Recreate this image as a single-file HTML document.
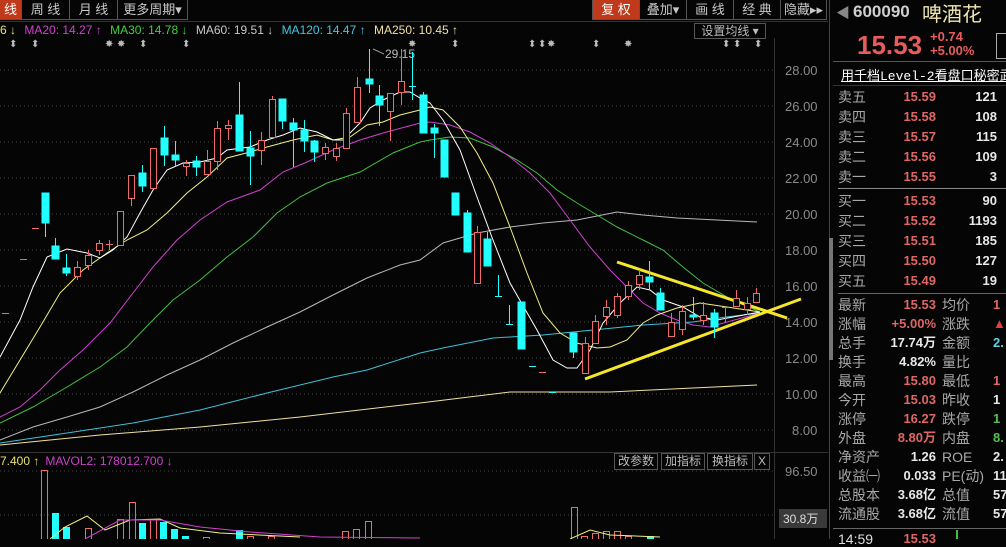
<!DOCTYPE html>
<html><head><meta charset="utf-8"><style>
html,body{margin:0;padding:0;background:#050505;width:1006px;height:539px;overflow:hidden;font-family:"Liberation Sans","Noto Sans CJK SC",sans-serif;}
.abs{position:absolute;white-space:nowrap;}
.tb{position:absolute;top:0;height:20px;line-height:20px;font-size:13px;color:#c8c8c8;text-align:center;border-right:1px solid #555;border-bottom:1px solid #555;box-sizing:border-box;}
.red{background:#c0391b;color:#fff;}
.lab,.pr,.vol,.l2,.v2{line-height:16px;height:16px;white-space:nowrap;}
.lab{position:absolute;left:838px;font-size:14px;color:#a8a8a8;}
.pr{position:absolute;width:70px;left:866px;text-align:right;font-size:13px;font-weight:bold;color:#e06666;}
.vol{position:absolute;width:60px;left:937px;text-align:right;font-size:13px;font-weight:bold;color:#e8e8e8;}
.l2{position:absolute;left:942px;font-size:14px;color:#a8a8a8;}
.v2{position:absolute;left:993px;font-size:13px;font-weight:bold;}
</style></head><body>
<div style="position:absolute;left:0;top:0;width:1006px;height:539px;">
<!-- toolbar -->
<div class="tb red" style="left:0;width:22px;">线</div>
<div class="tb" style="left:22px;width:48px;">周 线</div>
<div class="tb" style="left:70px;width:48px;">月 线</div>
<div class="tb" style="left:118px;width:70px;">更多周期▾</div>
<div class="tb red" style="left:592px;width:48px;border-left:1px solid #555">复 权</div>
<div class="tb" style="left:640px;width:47px;">叠加▾</div>
<div class="tb" style="left:687px;width:47px;">画 线</div>
<div class="tb" style="left:734px;width:47px;">经 典</div>
<div class="tb" style="left:781px;width:46px;">隐藏▸▸</div>
<div class="abs" style="left:0;top:21px;width:828px;height:1px;background:#333"></div>
<!-- MA legend -->
<div class="abs" style="left:0;top:22px;font-size:12px;line-height:16px;">
<span style="color:#e8e06a">6 ↓</span>
<span style="color:#d040d0;margin-left:5px">MA20: 14.27 ↑</span>
<span style="color:#40d040;margin-left:5px">MA30: 14.78 ↓</span>
<span style="color:#c8c8c8;margin-left:5px">MA60: 19.51 ↓</span>
<span style="color:#40c8e0;margin-left:5px">MA120: 14.47 ↑</span>
<span style="color:#f0e0a0;margin-left:5px">MA250: 10.45 ↑</span>
</div>
<div class="abs" style="left:694px;top:23px;width:70px;height:14px;border:1px solid #555;font-size:12px;line-height:14px;color:#bbb;text-align:center;">设置均线 ▾</div>

<svg class="abs" style="left:0;top:0" width="830" height="539" xmlns="http://www.w3.org/2000/svg">
<g stroke="#444" stroke-dasharray="1,3">
<line x1="0" y1="70" x2="774" y2="70"/><line x1="0" y1="106" x2="774" y2="106"/><line x1="0" y1="142" x2="774" y2="142"/><line x1="0" y1="178" x2="774" y2="178"/><line x1="0" y1="214" x2="774" y2="214"/><line x1="0" y1="250" x2="774" y2="250"/><line x1="0" y1="286" x2="774" y2="286"/><line x1="0" y1="322" x2="774" y2="322"/><line x1="0" y1="358" x2="774" y2="358"/><line x1="0" y1="394" x2="774" y2="394"/><line x1="0" y1="430" x2="774" y2="430"/>
<line x1="0" y1="471" x2="774" y2="471"/><line x1="0" y1="515" x2="774" y2="515"/>
</g>
<line x1="774.5" y1="38" x2="774.5" y2="539" stroke="#333"/>
<line x1="0" y1="452.5" x2="828" y2="452.5" stroke="#333"/>
<g fill="#8a8a8a" font-size="13" font-family="Liberation Sans">
<text x="785" y="75">28.00</text><text x="785" y="111">26.00</text><text x="785" y="147">24.00</text><text x="785" y="183">22.00</text><text x="785" y="219">20.00</text><text x="785" y="255">18.00</text><text x="785" y="291">16.00</text><text x="785" y="327">14.00</text><text x="785" y="363">12.00</text><text x="785" y="399">10.00</text><text x="792" y="435">8.00</text>
<text x="785" y="476">96.50</text><text x="785" y="520">47.70</text>
</g>
<rect x="779" y="509" width="48" height="19" fill="#3a3a3a"/>
<text x="783" y="523" fill="#ddd" font-size="12" font-family="Liberation Sans,Noto Sans CJK SC">30.8万</text>
<!-- markers -->
<g fill="#bbb" font-size="10" font-family="DejaVu Sans">
<text x="9" y="47">⬍</text><text x="31" y="47">⬍</text><text x="105" y="47">✸</text><text x="117" y="47">✸</text><text x="139" y="47">⬍</text><text x="182" y="47">⬍</text><text x="408" y="47">✸</text><text x="451" y="47">⬍</text><text x="528" y="47">⬍</text><text x="538" y="47">⬍</text><text x="547" y="47">✸</text><text x="592" y="47">⬍</text><text x="624" y="47">✸</text><text x="722" y="47">⬍</text><text x="733" y="47">⬍</text><text x="754" y="47">⬍</text>
</g>
<text x="385" y="58" fill="#bbb" font-size="12" font-family="Liberation Sans">29.15</text>
<line x1="373" y1="49" x2="384" y2="54" stroke="#999"/>
<!-- MA lines -->
<g fill="none" stroke-width="1">
<polyline stroke="#f0e0a0" points="0,445 100,435 200,427 300,417 420,403 510,392 610,392 693,388 757,385"/>
<polyline stroke="#40c0d8" points="0,443 67,433 133,423 200,410 267,393 333,377 367,370 420,353 443,348 493,338 543,335 593,330 643,325 693,322 726,317 760,313"/>
<polyline stroke="#b8b8b8" points="0,440 33,427 67,417 100,407 133,392 167,375 200,360 233,343 267,327 300,312 333,295 367,278 400,265 420,260 443,243 477,233 510,227 543,223 577,220 617,212 643,215 677,218 757,222"/>
<polyline stroke="#40c040" points="0,423 33,407 67,387 100,367 127,347 150,323 173,300 200,280 227,257 253,237 277,213 300,197 327,183 360,172 393,153 420,142 430,140 450,137 470,138 493,147 517,160 537,173 557,190 577,203 597,215 617,227 643,240 663,250 683,267 703,283 727,297 760,312"/>
<polyline stroke="#d040d0" points="0,417 20,407 40,390 60,370 83,350 110,323 133,293 153,267 177,240 200,220 227,202 260,190 283,172 307,162 333,150 360,140 383,133 420,123 430,122 450,125 470,132 490,143 510,157 530,173 550,193 570,220 590,247 610,270 627,287 643,303 660,313 677,320 693,325 710,327 727,322 760,313"/>
<polyline stroke="#f0f080" points="0,393 20,360 40,327 60,293 83,270 107,253 127,240 147,230 167,213 187,193 207,177 227,158 250,152 267,147 293,140 317,135 333,140 350,137 367,125 383,122 400,115 420,110 430,107 443,110 460,127 477,153 493,183 510,227 527,273 543,313 560,333 577,343 597,348 610,347 627,340 643,323 657,315 677,308 700,303 727,307 760,312"/>
<polyline stroke="#ffffff" points="0,357 20,320 33,287 47,257 67,249 87,253 100,258 113,250 127,237 140,213 153,190 167,170 183,163 200,162 217,158 227,150 250,147 267,140 283,135 300,128 317,132 333,140 343,140 360,123 370,108 383,100 400,92 410,92 420,98 430,103 443,120 460,150 477,197 493,240 510,283 537,330 553,360 567,368 577,368 590,350 603,323 620,303 637,287 650,290 663,300 683,307 700,317 717,320 733,317 760,312"/>
</g>
<!-- trend lines -->
<line x1="617" y1="262" x2="787" y2="318" stroke="#f5e62a" stroke-width="3"/>
<line x1="585" y1="379" x2="801" y2="299" stroke="#f5e62a" stroke-width="3"/>
<!-- candles -->
<g stroke-width="1">
<g stroke="#2ff" fill="#2ff">
<line x1="45.5" y1="193" x2="45.5" y2="237"/><rect x="42" y="193" width="7" height="30"/>
<line x1="55.5" y1="238" x2="55.5" y2="259"/><rect x="52" y="246" width="7" height="13"/>
<line x1="66.5" y1="254" x2="66.5" y2="276"/><rect x="63" y="268" width="7" height="5"/>
<line x1="142.5" y1="165" x2="142.5" y2="192"/><rect x="139" y="173" width="7" height="13"/>
<line x1="164.5" y1="126" x2="164.5" y2="166"/><rect x="161" y="138" width="7" height="17"/>
<line x1="175.5" y1="141" x2="175.5" y2="166"/><rect x="172" y="155" width="7" height="5"/>
<line x1="196.5" y1="156" x2="196.5" y2="176"/><rect x="193" y="161" width="7" height="6"/>
<line x1="239.5" y1="82" x2="239.5" y2="151"/><rect x="236" y="115" width="7" height="36"/>
<line x1="250.5" y1="131" x2="250.5" y2="185"/><rect x="247" y="148" width="7" height="8"/>
<line x1="282.5" y1="99" x2="282.5" y2="129"/><rect x="279" y="99" width="7" height="22"/>
<line x1="293.5" y1="118" x2="293.5" y2="167"/><rect x="290" y="123" width="7" height="7"/>
<line x1="304.5" y1="120" x2="304.5" y2="152"/><rect x="301" y="130" width="7" height="11"/>
<line x1="314.5" y1="140" x2="314.5" y2="162"/><rect x="311" y="141" width="7" height="11"/>
<line x1="369.5" y1="49" x2="369.5" y2="93"/><rect x="366" y="79" width="7" height="5"/>
<line x1="379.5" y1="85" x2="379.5" y2="126"/><rect x="376" y="96" width="7" height="9"/>
<line x1="412.5" y1="52" x2="412.5" y2="100"/><line x1="409" y1="86.5" x2="416" y2="86.5"/>
<line x1="423.5" y1="92" x2="423.5" y2="133"/><rect x="420" y="95" width="7" height="38"/>
<line x1="434.5" y1="124" x2="434.5" y2="158"/><rect x="431" y="128" width="7" height="5"/>
<rect x="441" y="140" width="7" height="37"/>
<rect x="452" y="193" width="7" height="22"/>
<line x1="467.5" y1="210" x2="467.5" y2="252"/><rect x="464" y="213" width="7" height="39"/>
<line x1="487.5" y1="232" x2="487.5" y2="266"/><rect x="484" y="239" width="7" height="27"/>
<line x1="498.5" y1="275" x2="498.5" y2="296"/><line x1="495" y1="296.5" x2="502" y2="296.5"/>
<line x1="509.5" y1="305" x2="509.5" y2="325"/><line x1="506" y1="324.5" x2="513" y2="324.5"/>
<rect x="518" y="302" width="7" height="47"/>
<line x1="529" y1="366.5" x2="536" y2="366.5"/>
<line x1="549" y1="392.5" x2="556" y2="392.5"/>
<line x1="573.5" y1="333" x2="573.5" y2="358"/><rect x="570" y="333" width="7" height="19"/>
<line x1="649.5" y1="261" x2="649.5" y2="290"/><rect x="646" y="277" width="7" height="5"/>
<line x1="660.5" y1="288" x2="660.5" y2="310"/><rect x="657" y="293" width="7" height="17"/>
<line x1="693.5" y1="297" x2="693.5" y2="320"/><rect x="690" y="315" width="7" height="2"/>
<line x1="714.5" y1="309" x2="714.5" y2="338"/><rect x="711" y="313" width="7" height="14"/>
</g>
<g stroke="#f06a6a" fill="none">
<line x1="2" y1="313.5" x2="9" y2="313.5"/><line x1="20" y1="259.5" x2="27" y2="259.5"/><line x1="32" y1="228.5" x2="39" y2="228.5"/>
<line x1="77.5" y1="261" x2="77.5" y2="280"/><rect x="74.5" y="267.5" width="6" height="9" fill="#050505"/>
<line x1="88.5" y1="250" x2="88.5" y2="270"/><rect x="85.5" y="255.5" width="6" height="10" fill="#050505"/>
<line x1="99.5" y1="240" x2="99.5" y2="255"/><rect x="96.5" y="243.5" width="6" height="7" fill="#050505"/>
<line x1="109.5" y1="240" x2="109.5" y2="250"/><line x1="106" y1="244.5" x2="113" y2="244.5"/>
<rect x="117.5" y="211.5" width="6" height="34" fill="#050505"/>
<line x1="131.5" y1="175" x2="131.5" y2="206"/><rect x="128.5" y="175.5" width="6" height="23" fill="#050505"/>
<rect x="150.5" y="148.5" width="6" height="40" fill="#050505"/>
<line x1="186.5" y1="160" x2="186.5" y2="176"/><rect x="183.5" y="163.5" width="6" height="3" fill="#050505"/>
<line x1="207.5" y1="150" x2="207.5" y2="170"/><rect x="204.5" y="161.5" width="6" height="13" fill="#050505"/>
<line x1="217.5" y1="121" x2="217.5" y2="170"/><rect x="214.5" y="128.5" width="6" height="33" fill="#050505"/>
<line x1="228.5" y1="120" x2="228.5" y2="140"/><rect x="225.5" y="125.5" width="6" height="3" fill="#050505"/>
<line x1="261.5" y1="132" x2="261.5" y2="165"/><rect x="258.5" y="140.5" width="6" height="10" fill="#050505"/>
<line x1="272.5" y1="96" x2="272.5" y2="137"/><rect x="269.5" y="99.5" width="6" height="38" fill="#050505"/>
<line x1="325.5" y1="143" x2="325.5" y2="160"/><rect x="322.5" y="147.5" width="6" height="6" fill="#050505"/>
<line x1="336.5" y1="143" x2="336.5" y2="161"/><rect x="333.5" y="148.5" width="6" height="8" fill="#050505"/>
<line x1="346.5" y1="108" x2="346.5" y2="148"/><rect x="343.5" y="113.5" width="6" height="35" fill="#050505"/>
<line x1="357.5" y1="77" x2="357.5" y2="122"/><rect x="354.5" y="87.5" width="6" height="35" fill="#050505"/>
<line x1="390.5" y1="93" x2="390.5" y2="141"/><rect x="387.5" y="93.5" width="6" height="18" fill="#050505"/>
<line x1="401.5" y1="49" x2="401.5" y2="105"/><rect x="398.5" y="81.5" width="6" height="11" fill="#050505"/>
<line x1="477.5" y1="226" x2="477.5" y2="283"/><rect x="474.5" y="232.5" width="6" height="51" fill="#050505"/>
<line x1="539" y1="372.5" x2="546" y2="372.5"/>
<line x1="585.5" y1="337" x2="585.5" y2="373"/><rect x="582.5" y="343.5" width="6" height="30" fill="#050505"/>
<line x1="595.5" y1="315" x2="595.5" y2="343"/><rect x="592.5" y="321.5" width="6" height="22" fill="#050505"/>
<line x1="606.5" y1="300" x2="606.5" y2="325"/><rect x="603.5" y="307.5" width="6" height="9" fill="#050505"/>
<line x1="617.5" y1="293" x2="617.5" y2="318"/><rect x="614.5" y="296.5" width="6" height="19" fill="#050505"/>
<line x1="628.5" y1="281" x2="628.5" y2="300"/><rect x="625.5" y="285.5" width="6" height="11" fill="#050505"/>
<line x1="639.5" y1="270" x2="639.5" y2="290"/><rect x="636.5" y="275.5" width="6" height="9" fill="#050505"/>
<line x1="671.5" y1="313" x2="671.5" y2="336"/><rect x="668.5" y="322.5" width="6" height="14" fill="#050505"/>
<line x1="682.5" y1="305" x2="682.5" y2="335"/><rect x="679.5" y="311.5" width="6" height="18" fill="#050505"/>
<line x1="703.5" y1="302" x2="703.5" y2="325"/><rect x="700.5" y="315.5" width="6" height="5" fill="#050505"/>
<line x1="725.5" y1="306" x2="725.5" y2="322"/><line x1="722" y1="307.5" x2="729" y2="307.5"/>
<line x1="736.5" y1="290" x2="736.5" y2="306"/><rect x="733.5" y="298.5" width="6" height="8" fill="#050505"/>
<line x1="747.5" y1="297" x2="747.5" y2="315"/><rect x="744.5" y="303.5" width="6" height="6" fill="#050505"/>
<line x1="756.5" y1="288" x2="756.5" y2="302"/><rect x="753.5" y="293.5" width="6" height="9" fill="#050505"/>
</g>
</g>
<!-- volume -->
<g stroke="#f06a6a" fill="none">
<rect x="41.5" y="470.5" width="6" height="75"/><rect x="85.5" y="528.5" width="6" height="20"/><rect x="117.5" y="519.5" width="6" height="20"/><rect x="129.5" y="502.5" width="6" height="40"/><rect x="150.5" y="519.5" width="6" height="30"/><rect x="203.5" y="537.5" width="6" height="10"/><rect x="247.5" y="536.5" width="6" height="10"/><rect x="268.5" y="536.5" width="6" height="10"/><rect x="342.5" y="531.5" width="6" height="10"/><rect x="353.5" y="529.5" width="6" height="10"/><rect x="365.5" y="521.5" width="6" height="20"/><rect x="571.5" y="507.5" width="6" height="40"/><rect x="581.5" y="536.5" width="6" height="10"/><rect x="592.5" y="533.5" width="6" height="10"/><rect x="603.5" y="531.5" width="6" height="10"/><rect x="614.5" y="531.5" width="6" height="10"/><rect x="625.5" y="536.5" width="6" height="10"/>
</g>
<g fill="#2ff">
<rect x="52" y="513" width="7" height="30"/><rect x="63" y="527" width="7" height="20"/><rect x="139" y="523" width="7" height="20"/><rect x="160" y="522" width="7" height="20"/><rect x="171" y="529" width="7" height="20"/><rect x="182" y="536" width="7" height="10"/><rect x="236" y="530" width="7" height="10"/><rect x="647" y="536" width="7" height="10"/>
</g>
<polyline fill="none" stroke="#f0f080" points="50,539 65,527 87,516 105,530 130,520 160,519 180,528 220,533 300,537"/>
<polyline fill="none" stroke="#d040d0" points="85,539 120,520 160,520 200,527 250,532 320,537 420,538"/>
<polyline fill="none" stroke="#f0f080" points="570,539 590,530 610,535 660,537"/>
</svg>
<!-- volume header -->
<div class="abs" style="left:0;top:453px;font-size:12px;line-height:16px;"><span style="color:#e8e06a">7.400 ↑</span><span style="color:#d040d0;margin-left:6px">MAVOL2: 178012.700 ↓</span></div>
<div class="abs" style="left:614px;top:453px;width:42px;height:15px;border:1px solid #555;font-size:12px;line-height:15px;color:#bbb;text-align:center">改参数</div>
<div class="abs" style="left:661px;top:453px;width:42px;height:15px;border:1px solid #555;font-size:12px;line-height:15px;color:#bbb;text-align:center">加指标</div>
<div class="abs" style="left:707px;top:453px;width:44px;height:15px;border:1px solid #555;font-size:12px;line-height:15px;color:#bbb;text-align:center">换指标</div>
<div class="abs" style="left:754px;top:453px;width:14px;height:15px;border:1px solid #555;font-size:12px;line-height:15px;color:#bbb;text-align:center">X</div>

<!-- right panel -->
<div class="abs" style="left:829px;top:0;width:1px;height:539px;background:#444"></div>
<div class="abs" style="left:829px;top:238px;width:4px;height:122px;background:#777"></div>
<div class="abs" style="left:836px;top:3px;font-size:14px;color:#888">◀</div>
<div class="abs" style="left:853px;top:2px;font-size:17px;font-weight:bold;color:#cfcfcf">600090</div>
<div class="abs" style="left:922px;top:0px;font-size:20px;color:#f0e6b0;font-family:'Noto Sans CJK SC',sans-serif;line-height:26px">啤酒花</div>
<div class="abs" style="left:857px;top:30px;font-size:26px;font-weight:bold;color:#e85c5c">15.53</div>
<div class="abs" style="left:930px;top:30px;font-size:13px;font-weight:bold;color:#e85c5c;line-height:14px">+0.74<br>+5.00%</div>
<div class="abs" style="left:996px;top:33px;width:14px;height:24px;border:1px solid #aaa"></div>
<div class="abs" style="left:833px;top:61px;width:173px;height:1px;background:#555"></div>
<div class="abs" style="left:841px;top:65px;font-size:13px;color:#fff;text-decoration:underline;font-family:'Liberation Mono','Noto Sans CJK SC',monospace">用千档Level-2看盘口秘密武</div>
<div class="abs" style="left:833px;top:85px;width:173px;height:1px;background:#333"></div>

<div class="lab" style="top:89px">卖五</div><div class="pr" style="top:89px">15.59</div><div class="vol" style="top:89px">121</div>
<div class="lab" style="top:109px">卖四</div><div class="pr" style="top:109px">15.58</div><div class="vol" style="top:109px">108</div>
<div class="lab" style="top:129px">卖三</div><div class="pr" style="top:129px">15.57</div><div class="vol" style="top:129px">115</div>
<div class="lab" style="top:149px">卖二</div><div class="pr" style="top:149px">15.56</div><div class="vol" style="top:149px">109</div>
<div class="lab" style="top:169px">卖一</div><div class="pr" style="top:169px">15.55</div><div class="vol" style="top:169px">3</div>
<div class="abs" style="left:838px;top:188px;width:168px;height:1px;background:#888"></div>
<div class="lab" style="top:193px">买一</div><div class="pr" style="top:193px">15.53</div><div class="vol" style="top:193px">90</div>
<div class="lab" style="top:213px">买二</div><div class="pr" style="top:213px">15.52</div><div class="vol" style="top:213px">1193</div>
<div class="lab" style="top:233px">买三</div><div class="pr" style="top:233px">15.51</div><div class="vol" style="top:233px">185</div>
<div class="lab" style="top:253px">买四</div><div class="pr" style="top:253px">15.50</div><div class="vol" style="top:253px">127</div>
<div class="lab" style="top:273px">买五</div><div class="pr" style="top:273px">15.49</div><div class="vol" style="top:273px">19</div>
<div class="abs" style="left:838px;top:293px;width:168px;height:1px;background:#666"></div>

<div class="lab" style="top:297px">最新</div><div class="pr" style="top:297px">15.53</div><div class="l2" style="top:297px">均价</div><div class="v2" style="top:297px;color:#e06666">1</div>
<div class="lab" style="top:316px">涨幅</div><div class="pr" style="top:316px">+5.00%</div><div class="l2" style="top:316px">涨跌</div><div class="v2" style="top:316px;color:#e04040">▲</div>
<div class="lab" style="top:335px">总手</div><div class="pr" style="top:335px;color:#e8e8e8">17.74万</div><div class="l2" style="top:335px">金额</div><div class="v2" style="top:335px;color:#60d0e0">2.</div>
<div class="lab" style="top:354px">换手</div><div class="pr" style="top:354px;color:#e8e8e8">4.82%</div><div class="l2" style="top:354px">量比</div>
<div class="lab" style="top:373px">最高</div><div class="pr" style="top:373px">15.80</div><div class="l2" style="top:373px">最低</div><div class="v2" style="top:373px;color:#e06666">1</div>
<div class="lab" style="top:392px">今开</div><div class="pr" style="top:392px">15.03</div><div class="l2" style="top:392px">昨收</div><div class="v2" style="top:392px;color:#e8e8e8">1</div>
<div class="lab" style="top:411px">涨停</div><div class="pr" style="top:411px">16.27</div><div class="l2" style="top:411px">跌停</div><div class="v2" style="top:411px;color:#50c050">1</div>
<div class="lab" style="top:430px">外盘</div><div class="pr" style="top:430px">8.80万</div><div class="l2" style="top:430px">内盘</div><div class="v2" style="top:430px;color:#50c050">8.</div>
<div class="lab" style="top:449px">净资产</div><div class="pr" style="top:449px;color:#e8e8e8">1.26</div><div class="l2" style="top:449px">ROE</div><div class="v2" style="top:449px;color:#e8e8e8">2.</div>
<div class="lab" style="top:468px">收益㈠</div><div class="pr" style="top:468px;color:#e8e8e8">0.033</div><div class="l2" style="top:468px">PE(动)</div><div class="v2" style="top:468px;color:#e8e8e8">11</div>
<div class="lab" style="top:487px">总股本</div><div class="pr" style="top:487px;color:#e8e8e8">3.68亿</div><div class="l2" style="top:487px">总值</div><div class="v2" style="top:487px;color:#e8e8e8">57</div>
<div class="lab" style="top:506px">流通股</div><div class="pr" style="top:506px;color:#e8e8e8">3.68亿</div><div class="l2" style="top:506px">流值</div><div class="v2" style="top:506px;color:#e8e8e8">57</div>
<div class="abs" style="left:833px;top:528px;width:173px;height:1px;background:#666"></div>
<div class="lab" style="top:531px;color:#ddd">14:59</div><div class="pr" style="top:531px">15.53</div>
<div class="abs" style="left:956px;top:530px;width:2px;height:9px;background:#40c040"></div>
</div>
</body></html>
